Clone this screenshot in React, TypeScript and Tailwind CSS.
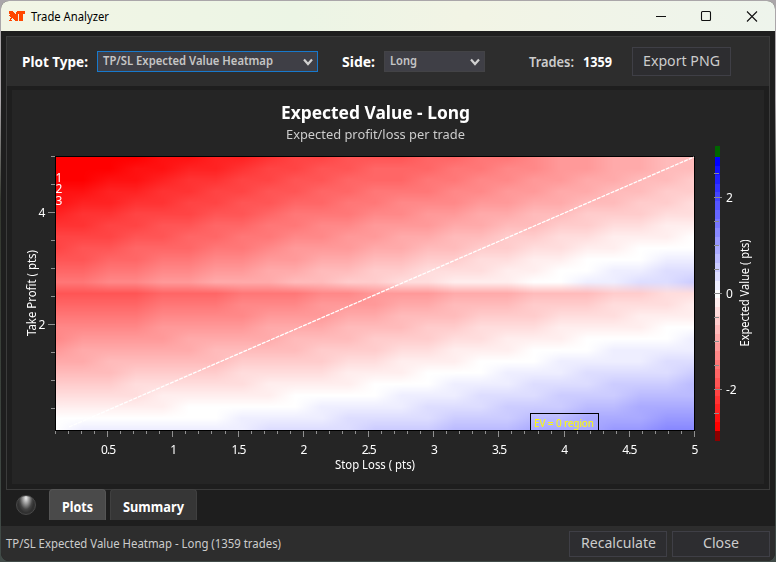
import { useLayoutEffect, useRef } from "react";

const COLS = [0, 4.8, 9.6, 14.4, 19.2, 24];
const ROWS = [0, 3, 6, 9, 11, 12, 15, 18, 21, 24];
// Expected value in palette steps: -15 is full red, 0 white, 15 full blue.
const VALUES = [
  [-16.6, -13.8, -11, -9, -6.3, -4],
  [-14.5, -12, -9.5, -7.5, -5.3, -3],
  [-12, -10, -7.5, -5.5, -2.9, -1],
  [-10.2, -8, -5.5, -3.2, -0.8, 1],
  [-8, -6, -3.8, -1.4, 0.2, 3],
  [-10.4, -9, -7.3, -5.5, -4, -2.1],
  [-7.5, -6.2, -5, -3.1, -1.3, -0.1],
  [-4.7, -3.9, -2.7, -0.9, 0.7, 2],
  [-2.2, -1.2, -0.2, 1.1, 2.8, 4.3],
  [0.4, 0.9, 2, 3.3, 5, 7],
];

function seg(stops: number[], v: number): [number, number] {
  let i = 0;
  while (i < stops.length - 2 && v > stops[i + 1]) i++;
  return [i, (v - stops[i]) / (stops[i + 1] - stops[i])];
}

function level(c: number, r: number) {
  const [i, u] = seg(COLS, c);
  const [j, t] = seg(ROWS, r);
  const a = VALUES[j][i] * (1 - u) + VALUES[j][i + 1] * u;
  const b = VALUES[j + 1][i] * (1 - u) + VALUES[j + 1][i + 1] * u;
  return Math.max(-15, Math.min(15, Math.round(a * (1 - t) + b * t)));
}

function Heatmap() {
  const ref = useRef<HTMLCanvasElement>(null);
  useLayoutEffect(() => {
    const ctx = ref.current!.getContext("2d")!;
    const w = 638;
    const h = 273;
    const grid = Array.from({ length: 26 }, (_, r) =>
      Array.from({ length: 26 }, (_, c) => level(Math.min(c, 24), Math.min(r, 24))),
    );
    const img = ctx.createImageData(w, h);
    for (let y = 0; y < h; y++) {
      const gy = (y / (h - 1)) * 24;
      const r = Math.floor(gy);
      const t = gy - r;
      for (let x = 0; x < w; x++) {
        const gx = (x / (w - 1)) * 24;
        const c = Math.floor(gx);
        const u = gx - c;
        const mix = (f: (n: number) => number) =>
          (f(grid[r][c]) * (1 - u) + f(grid[r][c + 1]) * u) * (1 - t) +
          (f(grid[r + 1][c]) * (1 - u) + f(grid[r + 1][c + 1]) * u) * t;
        const p = (y * w + x) * 4;
        img.data[p] = mix((n) => (n > 0 ? 255 - 17 * n : 255));
        img.data[p + 1] = mix((n) => 255 - 17 * Math.abs(n));
        img.data[p + 2] = mix((n) => (n < 0 ? 255 + 17 * n : 255));
        img.data[p + 3] = 255;
      }
    }
    ctx.putImageData(img, 0, 0);
  }, []);
  return <canvas ref={ref} width={638} height={273} className="block h-[273px] w-[638px]" />;
}

function Axes() {
  const xs = Array.from({ length: 50 }, (_, i) => i + 1);
  const ys = Array.from({ length: 10 }, (_, i) => i + 1);
  const steps = Array.from({ length: 31 }, (_, i) => 15 - i);
  return (
    <svg
      width="756"
      height="395"
      viewBox="12 90 756 395"
      className="absolute left-0 top-0"
      fontFamily="'Noto Sans', sans-serif"
      fontSize="12"
      fill="#fff"
    >
      <g shapeRendering="crispEdges">
        <rect x="55.5" y="156.5" width="639" height="274" fill="none" stroke="#000" />
        {xs.map((n) => {
          const x = Math.round(55 + ((n - 1) * 639) / 49) + 0.5;
          return <path key={n} d={`M${x} 431v${n % 5 === 0 ? 6 : 3}`} stroke="#919191" />;
        })}
        {ys.map((n) => {
          const y = 436.5 - 28 * n;
          return <path key={n} d={`M${n % 4 === 0 ? 48 : 51} ${y}H55`} stroke="#919191" />;
        })}
        <rect x="715" y="146" width="5" height="11" fill="#006400" />
        <rect x="715" y="431" width="5" height="10" fill="#8b0000" />
        {steps.map((n, i) => {
          const k = 255 - 17 * Math.abs(n);
          return (
            <rect
              key={n}
              x="715"
              y={157 + (i * 274) / 31}
              width="5"
              height="9.2"
              fill={n > 0 ? `rgb(${k},${k},255)` : `rgb(255,${k},${k})`}
            />
          );
        })}
        {[-5, -4, -3, -2, -1, 0, 1, 2, 3, 4, 5].map((n) => (
          <path key={n} d={`M714 ${293.5 + n * 24}h${n % 4 === 0 ? 8 : 5}`} stroke="#8c8c8c" />
        ))}
      </g>
      <path d="M69 427L694 157" stroke="#fff" strokeWidth="1.3" strokeDasharray="4 1" />
      <rect x="530.5" y="413.5" width="68" height="17" fill="none" stroke="#000" />
      <text x="534" y="427" fontSize="10" fill="#ff0" textLength="60">
        EV = 0 region
      </text>
      <g textAnchor="middle">
        <text x="59" y="182">1</text>
        <text x="59" y="193">2</text>
        <text x="59" y="205">3</text>
        <text x="42" y="217">4</text>
        <text x="42" y="329">2</text>
        {["0.5", "1", "1.5", "2", "2.5", "3", "3.5", "4", "4.5", "5"].map((s, i) => (
          <text key={s} x={108.6 + i * 65.15} y="454" textLength={s.length > 1 ? 15 : undefined}>
            {s}
          </text>
        ))}
        <text x="375" y="469" textLength="80" lengthAdjust="spacingAndGlyphs">
          Stop Loss ( pts)
        </text>
        <text transform="translate(36 293) rotate(-90)" textLength="86" lengthAdjust="spacingAndGlyphs">
          Take Profit ( pts)
        </text>
        <text transform="translate(749 293) rotate(-90)" textLength="107" lengthAdjust="spacingAndGlyphs">
          Expected Value ( pts)
        </text>
      </g>
      <text x="726" y="202">2</text>
      <text x="726" y="298">0</text>
      <text x="726" y="394">-2</text>
    </svg>
  );
}

function Label({ text, width, className }: { text: string; width: number; className: string }) {
  return (
    <svg width={width} height="24" className={`block shrink-0 overflow-visible ${className}`} fill="currentColor">
      <text x="0" y="17" textLength={width} lengthAdjust="spacingAndGlyphs">
        {text}
      </text>
    </svg>
  );
}

function Chevron() {
  return (
    <svg width="10" height="8" viewBox="0 0 10 8" className="ml-auto mr-1" fill="none" stroke="#d0d0d0" strokeWidth="2.200">
      <path d="M1 1.500L5 6L9 1.500" />
    </svg>
  );
}

export default function App() {
  return (
    <div className="h-[562px] w-[776px] overflow-hidden bg-[linear-gradient(#aaa6a9_0,#aaa6a9_100px,#34382f_200px,#414b48_100%)] pl-px pr-[1px] pt-px pb-[1px] font-['Noto_Sans',sans-serif]">
      <div className="flex h-[560px] flex-col overflow-hidden rounded-lg bg-[#1e1e1e]">
        <header className="flex h-[30px] shrink-0 items-center bg-[linear-gradient(90deg,#f2f5e5,#ecf5e5_38%,#f2f4e5_60%,#eef4ec)] pl-2 text-black">
          <svg width="16" height="10" viewBox="0 0 16 10" fill="#ff4700" shapeRendering="crispEdges">
            <path d="M0 0h4v1h1v1h1v1h1V1h1V0h8v3h-2v7h-4V3H9v7H6V9H5V8H4V7H3v1H2v1h1v1H0V9h1V7h1V6H1V5H0V4h1V3H0z" />
          </svg>
          <Label text="Trade Analyzer" width={78} className="ml-[6px] text-[12px]" />
          <svg width="104" height="12" viewBox="0 0 104 12" className="ml-auto mr-4" fill="none" stroke="#111" strokeWidth="1.100">
            <path d="M1 6.500h10" />
            <rect x="46.500" y="1.500" width="9" height="9" rx="1" />
            <path d="M92 1.500l10 10M102 1.500l-10 10" />
          </svg>
        </header>
        <main className="mx-[5px] mt-[5px] h-[454px] shrink-0 border border-[#3b3b3b]">
          <div className="flex h-[49px] items-center bg-[#2d2d2d] pl-[15px]">
            <Label text="Plot Type:" width={66} className="text-[14px] font-bold text-white" />
            <div className="ml-[9px] flex h-[21px] w-[221px] items-center border border-[#1879cc] bg-[#3f3f46] pl-[5px]">
              <Label text="TP/SL Expected Value Heatmap" width={170} className="-mt-[3px] text-[12px] font-semibold text-[#c5c5c5]" />
              <Chevron />
            </div>
            <Label text="Side:" width={33} className="ml-6 text-[14px] font-bold text-white" />
            <div className="ml-[9px] flex h-[21px] w-[101px] items-center border border-[#434346] bg-[#3f3f46] pl-[5px]">
              <Label text="Long" width={27} className="-mt-[3px] text-[12px] font-semibold text-[#c5c5c5]" />
              <Chevron />
            </div>
            <Label text="Trades:" width={45} className="ml-[44px] text-[13.500px] font-semibold text-[#ccc]" />
            <Label text="1359" width={29} className="ml-[9px] text-[13.500px] font-bold text-white" />
            <div className="ml-[20px] flex h-[29px] w-[99px] items-center justify-center border border-[#3f3f46] bg-[#2d2d30]">
              <Label text="Export PNG" width={77} className="-mt-0.5 text-[15px] text-[#ccc]" />
            </div>
          </div>
          <section className="relative ml-[5px] mr-[5px] mt-[4px] h-[394px] bg-[#252525] pt-[67px] pl-[44px]">
            <Heatmap />
            <Axes />
            <div className="absolute left-[-12px] top-[12px] flex w-[751px] flex-col items-center">
              <Label text="Expected Value - Long" width={189} className="text-[18px] font-bold text-white" />
              <Label text="Expected profit/loss per trade" width={179} className="-mt-[4px] text-[13px] text-[#ccc]" />
            </div>
          </section>
        </main>
        <nav className="-mt-px flex h-[37px] shrink-0 items-start pl-[15px]">
          <div className="mt-[6px] size-5 rounded-full border border-[#494949] bg-[radial-gradient(ellipse_at_50%_12%,#eee_0,#999_25%,#444_50%,#303030_65%)]" />
          <div className="ml-[13px] flex h-[31px] w-[57px] items-center justify-center rounded-t border border-b-0 border-[#555] bg-[#4a4a4a]">
            <Label text="Plots" width={31} className="mt-[3px] text-[14px] font-bold text-white" />
          </div>
          <div className="ml-[4px] flex h-[31px] w-[87px] items-center justify-center rounded-t border border-b-0 border-[#404040] bg-[#363636]">
            <Label text="Summary" width={61} className="mt-[3px] text-[14px] font-bold text-white" />
          </div>
        </nav>
        <footer className="flex min-h-0 flex-1 items-center bg-[#2d2d2d] pl-[5px] pr-[5px]">
          <Label text="TP/SL Expected Value Heatmap - Long (1359 trades)" width={275} className="-mt-px text-[12px] text-[#ccc]" />
          <div className="ml-auto flex h-[26px] w-[98px] items-center justify-center border border-[#3f3f46] bg-[#2d2d30]">
            <Label text="Recalculate" width={75} className="-mt-px text-[15px] text-[#ccc]" />
          </div>
          <div className="ml-[5px] flex h-[26px] w-[98px] items-center justify-center border border-[#3f3f46] bg-[#2d2d30]">
            <Label text="Close" width={36} className="-mt-px text-[15px] text-[#ccc]" />
          </div>
        </footer>
      </div>
    </div>
  );
}
